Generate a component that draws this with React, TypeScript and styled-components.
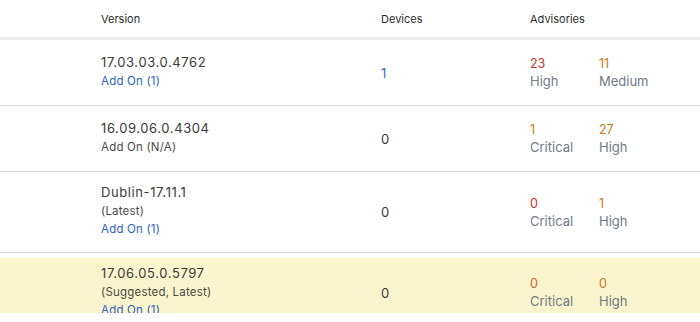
import React from "react";
import styled, { createGlobalStyle } from "styled-components";

const GlobalStyle = createGlobalStyle`
	body {
		margin: 0;
		background: #ffffff;
		font-family: Inter, "Liberation Sans", Arial, sans-serif;
		color: #3b3b3b;
	}
`;

const Viewport = styled.div`
	width: 700px;
	height: 313px;
	overflow: hidden;
`;

const HeaderRow = styled.div`
	display: grid;
	grid-template-columns: 101px 280px 149px 1fr;
	height: 37px;
	align-items: center;
	border-bottom: 3px solid #ebebeb;
	font-size: 11px;
	color: #2e2e2e;
`;

const Row = styled.div<{ $height: number; $highlight?: boolean }>`
	display: grid;
	grid-template-columns: 101px 280px 149px 1fr;
	align-items: center;
	height: ${(p) => p.$height}px;
	border-bottom: 1px solid #dcdcdc;
	background: ${(p) => (p.$highlight ? "#fbf5cd" : "transparent")};
	${(p) => p.$highlight && "margin-top: 5px; border-bottom: none;"}
`;

const VersionCell = styled.div`
	display: flex;
	flex-direction: column;
	padding-bottom: 4px;
`;

const VersionName = styled.div`
	font-size: 13px;
	line-height: 20px;
	letter-spacing: 0.6px;
	color: #3a3a3a;
`;

const SubText = styled.div<{ $link?: boolean }>`
	font-size: 11.5px;
	line-height: 18px;
	letter-spacing: 0.2px;
	color: ${(p) => (p.$link ? "#2d5fc6" : "#4a4a4a")};
`;

const DevicesCell = styled.div<{ $link?: boolean }>`
	font-size: 13px;
	color: ${(p) => (p.$link ? "#3a6fd0" : "#3a3a3a")};
`;

const Advisories = styled.div`
	display: grid;
	grid-template-columns: 69px 80px;
`;

const Advisory = styled.div`
	display: flex;
	flex-direction: column;
	gap: 2px;
`;

const Count = styled.div<{ $color: string }>`
	font-size: 12.5px;
	color: ${(p) => p.$color};
`;

const Level = styled.div`
	font-size: 13px;
	color: #6f7b88;
`;

const RED = "#c9332b";
const ORANGE = "#c27a1a";

type Adv = { count: number; level: string; color: string };

const rows: {
	version: string;
	notes: { text: string; link?: boolean }[];
	devices: number;
	advisories: Adv[];
	height: number;
	highlight?: boolean;
}[] = [
	{
		version: "17.03.03.0.4762",
		notes: [{ text: "Add On (1)", link: true }],
		devices: 1,
		advisories: [
			{ count: 23, level: "High", color: RED },
			{ count: 11, level: "Medium", color: ORANGE },
		],
		height: 65,
	},
	{
		version: "16.09.06.0.4304",
		notes: [{ text: "Add On (N/A)" }],
		devices: 0,
		advisories: [
			{ count: 1, level: "Critical", color: ORANGE },
			{ count: 27, level: "High", color: ORANGE },
		],
		height: 65,
	},
	{
		version: "Dublin-17.11.1",
		notes: [{ text: "(Latest)" }, { text: "Add On (1)", link: true }],
		devices: 0,
		advisories: [
			{ count: 0, level: "Critical", color: RED },
			{ count: 1, level: "High", color: ORANGE },
		],
		height: 80,
	},
	{
		version: "17.06.05.0.5797",
		notes: [{ text: "(Suggested, Latest)" }, { text: "Add On (1)", link: true }],
		devices: 0,
		advisories: [
			{ count: 0, level: "Critical", color: "#d0602a" },
			{ count: 0, level: "High", color: ORANGE },
		],
		height: 69,
		highlight: true,
	},
];

export default function App() {
	return (
		<>
			<GlobalStyle />
			<Viewport>
				<HeaderRow>
					<span />
					<span>Version</span>
					<span>Devices</span>
					<span>Advisories</span>
				</HeaderRow>
				{rows.map((row) => (
					<Row key={row.version} $height={row.height} $highlight={row.highlight}>
						<span />
						<VersionCell>
							<VersionName>{row.version}</VersionName>
							{row.notes.map((n) => (
								<SubText key={n.text} $link={n.link}>
									{n.text}
								</SubText>
							))}
						</VersionCell>
						<DevicesCell $link={row.devices > 0}>{row.devices}</DevicesCell>
						<Advisories>
							{row.advisories.map((a) => (
								<Advisory key={a.level}>
									<Count $color={a.color}>{a.count}</Count>
									<Level>{a.level}</Level>
								</Advisory>
							))}
						</Advisories>
					</Row>
				))}
			</Viewport>
		</>
	);
}
